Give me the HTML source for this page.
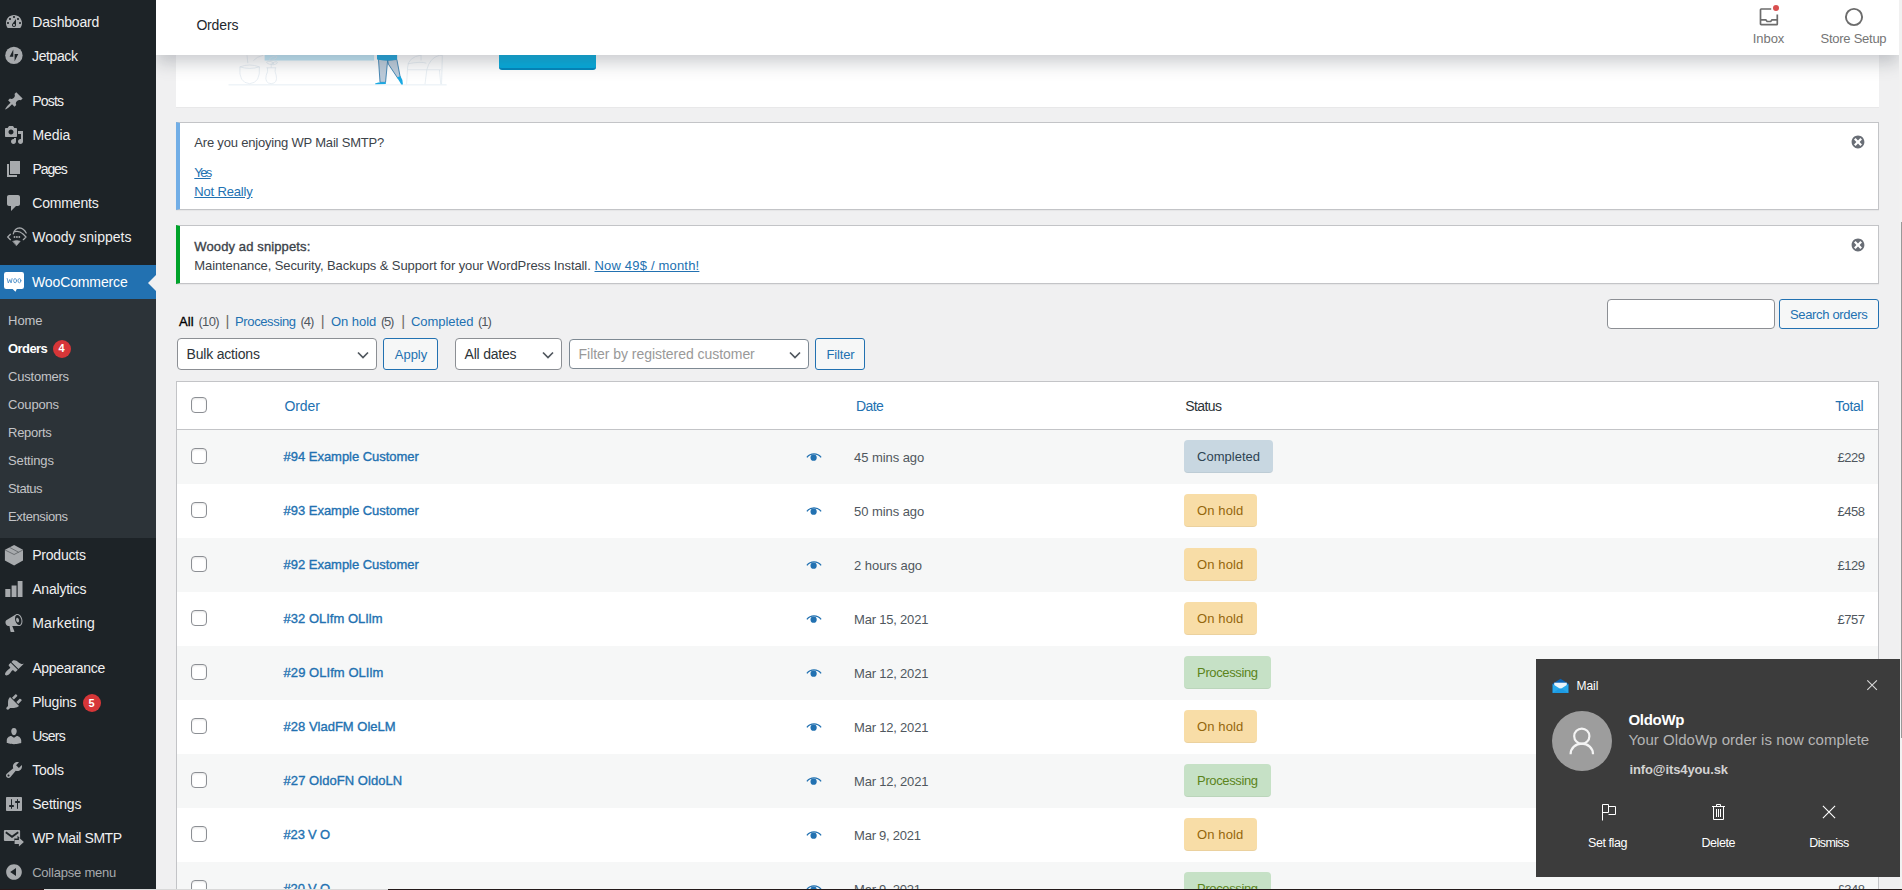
<!DOCTYPE html>
<html lang="en">
<head>
<meta charset="utf-8">
<title>Orders ‹ WooCommerce — WordPress</title>
<style>
*{box-sizing:border-box;margin:0;padding:0}
html,body{width:1902px;height:890px;overflow:hidden;background:#f0f0f1;font-family:"Liberation Sans",sans-serif;}
#root{position:relative;width:1902px;height:890px;overflow:hidden;}
.t{position:absolute;white-space:pre;font-family:"Liberation Sans",sans-serif;z-index:5;}
.abs{position:absolute;}
/* sidebar */
#menu{left:0;top:0;width:156px;height:890px;background:#1d2327;z-index:3;}
#sub{left:0;top:299px;width:156px;height:239px;background:#2c3338;z-index:3;}
#cur{left:0;top:265px;width:156px;height:34px;background:#2271b1;z-index:3;}
#arrow{left:148px;top:274.5px;width:0;height:0;border:8px solid transparent;border-right-color:#f0f0f1;border-left:0;z-index:4;}
.badge{width:18px;height:18px;border-radius:9px;background:#d63638;z-index:4;}
.ico{position:absolute;z-index:4;}
.ico svg{display:block}
/* header */
#hdr{left:156px;top:0;width:1743px;height:55px;background:#fff;z-index:2;box-shadow:0 8px 16px 0 rgba(85,93,102,.3);}
/* card */
#card{left:176px;top:0;width:1703px;height:108px;background:#fff;border-bottom:1px solid #e8e8e9;z-index:1;}
#btn{left:499px;top:30px;width:97px;height:40px;background:#00aadc;border-radius:3px;border-bottom:2px solid #0085bb;z-index:1;}
/* notices */
.notice{left:176px;width:1703px;background:#fff;border:1px solid #c3c4c7;border-left-width:4px;box-shadow:0 1px 1px rgba(0,0,0,.04);z-index:1;}
/* form controls */
.sel{background:#fff;border:1px solid #8c8f94;border-radius:4px;z-index:1;}
.but{background:#f6f7f7;border:1px solid #2271b1;border-radius:3px;z-index:1;}
.chev{position:absolute;z-index:2;}
/* table */
#tbl{left:176px;top:381px;width:1703px;height:520px;background:#fff;border:1px solid #c3c4c7;z-index:1;}
#thb{left:177px;top:429px;width:1701px;height:1px;background:#c3c4c7;z-index:2;}
.row{left:177px;width:1701px;height:54px;background:#f6f7f7;z-index:2;}
.cb{width:16px;height:16px;border:1px solid #8c8f94;border-radius:4px;background:#fff;z-index:3;box-shadow:inset 0 1px 2px rgba(0,0,0,.1);}
.st{height:33px;border-radius:4px;z-index:3;border-bottom:1px solid rgba(0,0,0,.05);}
.st.c{background:#c8d7e1;width:89px}
.st.h{background:#f8dda7;width:73px}
.st.p{background:#c6e1c6;width:87px}
.eye{position:absolute;z-index:3;}
/* toast */
#toast{left:1536px;top:659px;width:364px;height:218px;background:#3c3c3c;z-index:20;}
.ti{position:absolute;z-index:30;}
/* scrollbar + bottom line */
#sbar{left:1899px;top:0;width:3px;height:890px;background:#f1f1f1;z-index:12;}
#sthumb{left:1900.5px;top:222px;width:1.5px;height:516px;background:#999;z-index:13;}
.bl{top:889px;height:1px;z-index:40;}
</style>
</head>
<body>
<div id="root">

<!-- ======= sidebar ======= -->
<div id="menu" class="abs"></div>
<div id="sub" class="abs"></div>
<div id="cur" class="abs"></div>
<div id="arrow" class="abs"></div>
<div class="abs badge" style="left:52.8px;top:339.8px"></div>
<div class="abs badge" style="left:82.7px;top:694.3px"></div>
<div class="ico" style="left:4px;top:12px"><svg width="20" height="20" viewBox="0 0 20 20"><path fill="#a7aaad" d="M3.76 16h12.48c1.1-1.37 1.76-3.11 1.76-5 0-4.42-3.58-8-8-8s-8 3.58-8 8c0 1.89.66 3.63 1.76 5zM10 4c.55 0 1 .45 1 1s-.45 1-1 1-1-.45-1-1 .45-1 1-1zM6 6c.55 0 1 .45 1 1s-.45 1-1 1-1-.45-1-1 .45-1 1-1zm8 0c.55 0 1 .45 1 1s-.45 1-1 1-1-.45-1-1 .45-1 1-1zm-5.37 5.55L12 7v6c0 1.1-.9 2-2 2s-2-.9-2-2c0-.57.24-1.08.63-1.45zM4 10c.55 0 1 .45 1 1s-.45 1-1 1-1-.45-1-1 .45-1 1-1zm12 0c.55 0 1 .45 1 1s-.45 1-1 1-1-.45-1-1 .45-1 1-1zm-5 3c0-.55-.45-1-1-1s-1 .45-1 1 .45 1 1 1 1-.45 1-1z"/></svg></div>
<div class="ico" style="left:4px;top:46px"><svg width="20" height="20" viewBox="0 0 20 20"><circle cx="9.9" cy="9.4" r="8.7" fill="#a7aaad"/><path fill="#1d2327" d="M9.300 3.500v7.300H5.600zM10.600 15.300V8h3.700z"/></svg></div>
<div class="ico" style="left:4px;top:91px"><svg width="20" height="20" viewBox="0 0 20 20"><path fill="#a7aaad" d="M10.44 3.02l1.82-1.82 6.36 6.35-1.83 1.82c-1.05-.68-2.48-.57-3.41.36l-.75.75c-.92.93-1.04 2.35-.35 3.41l-1.83 1.82-2.41-2.41-2.8 2.79c-.42.42-3.38 2.71-3.8 2.29s1.86-3.39 2.28-3.81l2.79-2.79L4.1 9.36l1.83-1.82c1.05.69 2.48.57 3.4-.36l.75-.75c.93-.92 1.05-2.35.36-3.41z"/></svg></div>
<div class="ico" style="left:4px;top:125px"><svg width="20" height="20" viewBox="0 0 20 20"><path fill="#a7aaad" d="M13 11V4c0-.55-.45-1-1-1h-1.67L9 1H5L3.67 3H2c-.55 0-1 .45-1 1v7c0 .55.45 1 1 1h10c.55 0 1-.45 1-1zM7 4.5c1.38 0 2.5 1.12 2.5 2.5S8.38 9.5 7 9.5 4.5 8.38 4.5 7 5.62 4.5 7 4.5zM14 6h5v10.5c0 1.38-1.12 2.5-2.5 2.5S14 17.88 14 16.5s1.12-2.5 2.5-2.5c.17 0 .34.02.5.05V9h-3V6zm-4 8.05V13h2v3.5c0 1.38-1.12 2.5-2.5 2.5S7 17.88 7 16.5 8.12 14 9.5 14c.17 0 .34.02.5.05z"/></svg></div>
<div class="ico" style="left:4px;top:159px"><svg width="20" height="20" viewBox="0 0 20 20"><path fill="#a7aaad" d="M6 15V2h10v13H6zm-1 1h8v2H3V5h2v11z"/></svg></div>
<div class="ico" style="left:4px;top:193px"><svg width="20" height="20" viewBox="0 0 20 20"><path fill="#a7aaad" d="M5 2h9c1.1 0 2 .9 2 2v7c0 1.1-.9 2-2 2h-2l-5 5v-5H5c-1.1 0-2-.9-2-2V4c0-1.1.9-2 2-2z"/></svg></div>
<div class="ico" style="left:6.700px;top:227px"><svg width="21" height="20" viewBox="0 0 21 20" fill="none" stroke="#a7aaad" stroke-width="1.250" stroke-linecap="round" stroke-linejoin="round"><path d="M3.400 7.300L.7 10l2.700 2.700"/><path d="M16.300 7.300L19 10l-2.700 2.700"/><path d="M6.300 6.800C7.200 3 9.800.9 12.600.8c2.800.4 5.200 2.300 6.600 5.200"/><path d="M7.600 4.700c2.600-.9 5.900 0 8.300 2.200"/><circle cx="7.500" cy="10" r=".95" fill="#a7aaad" stroke="none"/><circle cx="9.900" cy="10" r=".95" fill="#a7aaad" stroke="none"/><circle cx="12.300" cy="10" r=".95" fill="#a7aaad" stroke="none"/><path d="M6 14.300l3.600-.9 3.600.9-3.600 4.200z" fill="#a7aaad" stroke-width=".6"/></svg></div>
<div class="ico" style="left:4px;top:272px"><svg width="20" height="20" viewBox="0 0 20 20"><path fill="#fff" d="M2.200 0h15.600a2.200 2.200 0 012.200 2.200v12.600a2.200 2.200 0 01-2.200 2.200H12.800l-1.300 2.700L8.600 17H2.200A2.200 2.200 0 010 14.800V2.200A2.200 2.200 0 012.200 0z"/><g fill="none" stroke="#4d8fc7" stroke-width=".85" stroke-linecap="round" stroke-linejoin="round"><path d="M3.200 6.500l1.100 4.500 1.500-3.500 1.300 3.500 1-4.500"/><ellipse cx="11.100" cy="8.700" rx="1.450" ry="2.100"/><ellipse cx="15.400" cy="8.700" rx="1.450" ry="2.100"/></g></svg></div>
<div class="ico" style="left:4px;top:544px"><svg width="20" height="22" viewBox="0 0 20 22"><path fill="#a7aaad" d="M10.100 1L19 5.700v10.700L10.100 21.500.9 16.400V5.700z"/><path stroke="#1d2327" stroke-width=".55" fill="none" opacity=".8" d="M1.100 6L10.100 10.500 18.900 6M5.600 3.400l8.900 4.800"/></svg></div>
<div class="ico" style="left:0;top:580px"><svg width="24" height="18" viewBox="0 0 24 18"><path fill="#a7aaad" d="M5.300 9h5.100v8H5.300zM11.600 5.600h4.900V17h-4.900zM17.700 1h4.800v16h-4.800z"/></svg></div>
<div class="ico" style="left:4px;top:613px"><svg width="20" height="20" viewBox="0 0 20 20"><path fill="#a7aaad" d="M18.15 5.94c.46 1.62.38 3.22-.02 4.48-.42 1.28-1.26 2.18-2.3 2.48-.16.06-.26.06-.4.06-.06.02-.12.02-.18.02-.06.02-.14.02-.22.02h-6.8l2.22 5.5c.02.14-.06.26-.14.34-.08.1-.24.16-.34.16H6.950c-.1 0-.26-.06-.34-.16-.08-.08-.16-.2-.14-.34l-1-5.500H4.250l-.02-.02c-.5.06-1.080-.18-1.540-.62s-.88-1.080-1.060-1.880c-.24-.8-.2-1.560-.02-2.200.18-.62.58-1.080 1.060-1.300l.02-.02 9-5.400c.1-.06.18-.1.24-.16.06-.04.14-.08.24-.12.16-.08.28-.12.5-.18 1.040-.3 2.240.1 3.220.98s1.840 2.240 2.260 3.860zm-2.580 5.980h-.02c.4-.1.74-.34 1.040-.7.58-.7.86-1.760.86-3.040 0-.64-.1-1.300-.28-1.980-.34-1.360-1.020-2.500-1.780-3.240s-1.680-1.100-2.460-.88c-.82.22-1.400.96-1.700 2-.32 1.040-.28 2.360.06 3.720.38 1.360 1 2.500 1.800 3.240.78.740 1.620 1.100 2.480.88zm-2.540-7.080c.22-.04.42-.02.62.04.38.16.76.48 1.020 1s.42 1.200.42 1.780c0 .3-.04.56-.12.8-.18.48-.44.84-.86.940-.34.1-.8-.06-1.140-.4s-.64-.86-.78-1.500c-.18-.62-.12-1.240.02-1.720s.48-.84.82-.94z"/></svg></div>
<div class="ico" style="left:4px;top:658px"><svg width="20" height="20" viewBox="0 0 20 20"><path fill="#a7aaad" d="M14.48 11.06L7.41 3.99l1.5-1.5c.5-.56 2.3-.47 3.51.32 1.21.8 1.43 1.28 2.91 2.1 1.18.64 2.45 1.26 4.45.85zm-.71.71L6.7 4.7 4.93 6.47c-.39.39-.39 1.02 0 1.41l1.06 1.06c.39.39.39 1.03 0 1.42-.6.6-1.43 1.11-2.21 1.69-.35.26-.7.53-1.01.84C1.43 14.23.4 16.08 1.4 17.07c.99 1 2.84-.03 4.18-1.36.31-.31.58-.66.85-1.02.57-.78 1.08-1.61 1.69-2.21.39-.39 1.02-.39 1.41 0l1.06 1.06c.39.39 1.02.39 1.41 0z"/></svg></div>
<div class="ico" style="left:4px;top:692px"><svg width="20" height="20" viewBox="0 0 20 20"><path fill="#a7aaad" d="M13.11 4.36L9.87 7.6 8 5.73l3.24-3.24c.35-.34 1.05-.2 1.56.32.52.51.66 1.21.31 1.55zm-8 1.77l.91-1.12 9.01 9.01-1.19.84c-.71.71-2.63 1.16-3.82 1.16H6.14L4.9 17.26c-.59.59-1.54.59-2.12 0-.59-.58-.59-1.53 0-2.12l1.24-1.24v-3.88c0-1.13.4-3.19 1.09-3.89zm7.26 3.97l3.24-3.24c.34-.35 1.04-.21 1.55.31.52.51.66 1.21.31 1.55l-3.24 3.25z"/></svg></div>
<div class="ico" style="left:4px;top:726px"><svg width="20" height="20" viewBox="0 0 20 20"><path fill="#a7aaad" d="M10 9.25c-2.27 0-2.73-3.44-2.73-3.44C7 4.02 7.82 2 9.97 2c2.16 0 2.98 2.02 2.71 3.81 0 0-.41 3.44-2.68 3.44zm0 2.57L12.72 10c2.39 0 4.52 2.33 4.52 4.53v2.49s-3.65 1.13-7.24 1.13c-3.65 0-7.24-1.13-7.24-1.13v-2.49c0-2.25 1.94-4.48 4.47-4.48z"/></svg></div>
<div class="ico" style="left:4px;top:760px"><svg width="20" height="20" viewBox="0 0 20 20"><path fill="#a7aaad" d="M16.68 9.77c-1.34 1.34-3.3 1.67-4.95.99l-5.41 6.52c-.99.99-2.59.99-3.58 0s-.99-2.59 0-3.57l6.52-5.42c-.68-1.65-.35-3.61.99-4.95 1.28-1.28 3.12-1.62 4.72-1.06l-2.89 2.89 2.82 2.82 2.86-2.87c.53 1.58.18 3.39-1.08 4.65zM3.81 16.21c.4.39 1.04.39 1.43 0 .4-.4.4-1.04 0-1.43-.39-.4-1.03-.4-1.43 0-.39.39-.39 1.03 0 1.43z"/></svg></div>
<div class="ico" style="left:4px;top:794px"><svg width="20" height="20" viewBox="0 0 20 20"><path fill="#a7aaad" d="M18 16V4c0-.55-.45-1-1-1H3c-.55 0-1 .45-1 1v12c0 .55.45 1 1 1h14c.55 0 1-.45 1-1zM8 11h1c.55 0 1 .45 1 1s-.45 1-1 1H8v1.5c0 .28-.22.5-.5.5s-.5-.22-.5-.5V13H6c-.55 0-1-.45-1-1s.45-1 1-1h1V5.500c0-.28.22-.5.5-.5s.5.22.5.5V11zm5-2h-1c-.55 0-1-.45-1-1s.45-1 1-1h1V5.500c0-.28.22-.5.5-.5s.5.22.5.5V7h1c.55 0 1 .45 1 1s-.45 1-1 1h-1v5.500c0 .28-.22.5-.5.5s-.5-.22-.5-.5V9z"/></svg></div>
<div class="ico" style="left:3px;top:829px"><svg width="22" height="20" viewBox="0 0 22 20"><path fill="#a7aaad" d="M2 1h14a1.100 1.100 0 011.100 1.100v7.100l-2.600-2.500v2.800h-3.200V12H2A1.100 1.100 0 01.9 10.900V2.100A1.100 1.100 0 012 1z"/><path d="M2.800 3.200l6.200 4.600 6.200-4.600" fill="none" stroke="#1d2327" stroke-width="1.800"/><path fill="#a7aaad" d="M11.600 10.900h4.300V8.600l5 4.400-5 4.400v-2.400h-4.300z"/></svg></div>
<div class="ico" style="left:4px;top:862px"><svg width="20" height="20" viewBox="0 0 20 20"><path fill="#a7aaad" d="M10 2.160c4.330 0 7.840 3.510 7.840 7.840s-3.510 7.840-7.840 7.840S2.160 14.330 2.160 10 5.670 2.160 10 2.160zm2 11.720V6.120L6.180 9.970z"/></svg></div>

<!-- ======= content ======= -->
<div id="card" class="abs"></div>
<div id="btn" class="abs"></div>
<svg class="abs" style="left:216px;top:50px;z-index:1" width="250" height="60" viewBox="0 0 1902 456">
<rect x="370" y="0" width="833" height="80" fill="#c1e8f8"/>
<path d="M95 265H1755" stroke="#e0eaf1" stroke-width="6" fill="none"/>
<g fill="none" stroke="#dde7ee" stroke-width="5">
<path d="M182 128Q170 250 256 256Q340 250 330 128M182 128Q256 100 330 128M182 128Q256 152 330 128M242 100L236 40M285 80Q310 50 360 40"/>
<path d="M384 135H458M392 135Q398 165 382 192Q368 252 420 256Q472 252 458 192Q444 165 452 135M420 135V100"/>
<ellipse cx="435" cy="62" rx="30" ry="12" transform="rotate(-25 435 62)"/><ellipse cx="412" cy="98" rx="28" ry="11" transform="rotate(15 412 98)"/><ellipse cx="448" cy="100" rx="20" ry="9" transform="rotate(-20 448 100)"/>
<path d="M1450 260L1458 130Q1462 55 1560 38M1458 150H1712M1458 105Q1560 85 1600 100M1590 260L1604 150Q1625 60 1700 40H1722L1716 260M1700 152L1710 260M1560 38V80"/>
</g>
<path d="M1236 70L1306 76L1290 246L1248 246Z" fill="#bccbda" stroke="#1f6fa6" stroke-width="6" stroke-linejoin="round"/>
<path d="M1306 78L1376 72L1402 208L1384 216L1312 108Z" fill="#bccbda" stroke="#1f6fa6" stroke-width="6" stroke-linejoin="round"/>
<path d="M1225 0H1378V72Q1300 88 1225 72Z" fill="#1aa3da"/>
<path d="M1210 254Q1245 240 1292 246V258L1212 261Z" fill="#19a9e3"/>
<path d="M1376 208L1404 200Q1426 232 1422 262H1410Z" fill="#19a9e3"/>
</svg>
<div id="hdr" class="abs"></div><svg class="abs" style="left:1758px;top:2px;z-index:6" width="24" height="26" viewBox="0 0 24 26"><path d="M13.200 7H3.200a.7.700 0 00-.7.700V22a.7.700 0 00.7.700h15.400a.7.700 0 00.7-.7V12.500" fill="none" stroke="#6c6c6c" stroke-width="1.700"/><path d="M2.500 17.800h5.300l1.300 1.700h3.600l1.300-1.700h5.300" fill="none" stroke="#6c6c6c" stroke-width="1.700"/><circle cx="18" cy="6" r="3" fill="#d94f4f"/></svg>
<svg class="abs" style="left:1843px;top:6px;z-index:6" width="22" height="22" viewBox="0 0 22 22"><circle cx="11" cy="11" r="8.100" fill="none" stroke="#6c6c6c" stroke-width="1.900"/></svg>

<div class="abs notice" style="top:122px;height:88px;border-left-color:#72aee6"></div>
<div class="abs notice" style="top:225px;height:59px;border-left-color:#00a32a"></div>
<div class="ico" style="left:1850px;top:134px"><svg width="16" height="16" viewBox="0 0 20 20"><path fill="#696e76" d="M10 2c4.420 0 8 3.580 8 8s-3.580 8-8 8-8-3.580-8-8 3.580-8 8-8zm5 11l-3-3 3-3-2-2-3 3-3-3-2 2 3 3-3 3 2 2 3-3 3 3z"/></svg></div><div class="ico" style="left:1850px;top:237px"><svg width="16" height="16" viewBox="0 0 20 20"><path fill="#696e76" d="M10 2c4.420 0 8 3.580 8 8s-3.580 8-8 8-8-3.580-8-8 3.580-8 8-8zm5 11l-3-3 3-3-2-2-3 3-3-3-2 2 3 3-3 3 2 2 3-3 3 3z"/></svg></div>

<div class="abs sel" style="left:1607px;top:299px;width:168px;height:30px"></div>
<div class="abs but" style="left:1779px;top:299px;width:100px;height:30px"></div>

<div class="abs sel" style="left:177px;top:338px;width:200px;height:32px"></div>
<div class="abs but" style="left:383px;top:338px;width:55px;height:32px"></div>
<div class="abs sel" style="left:455px;top:338px;width:107px;height:32px"></div>
<div class="abs sel" style="left:569px;top:339px;width:240px;height:30px;border-color:#7e8993"></div>
<div class="abs but" style="left:815px;top:338px;width:50px;height:32px"></div>
<svg class="chev" style="left:356.8px;top:350.6px" width="12" height="8" viewBox="0 0 12 8"><path d="M1 1.500l5 5 5-5" fill="none" stroke="#50575e" stroke-width="1.700"/></svg><svg class="chev" style="left:541.8px;top:350.6px" width="12" height="8" viewBox="0 0 12 8"><path d="M1 1.500l5 5 5-5" fill="none" stroke="#50575e" stroke-width="1.700"/></svg><svg class="chev" style="left:789px;top:350.6px" width="12" height="8" viewBox="0 0 12 8"><path d="M1 1.500l5 5 5-5" fill="none" stroke="#50575e" stroke-width="1.700"/></svg>

<div id="tbl" class="abs"></div>
<div id="thb" class="abs"></div>
<div class="abs row" style="top:430px"></div>
<div class="abs cb" style="left:191px;top:448px"></div>
<div class="abs st c" style="left:1184px;top:440px"></div>
<svg class="eye" style="left:806px;top:453px" width="16" height="9" viewBox="0 0 16 9"><path d="M.9 4.300C2.800 1.900 5.300.8 8 .8s5.200 1.100 7.100 3.500" fill="none" stroke="#2271b1" stroke-width="1.300"/><circle cx="7.600" cy="4.700" r="3.100" fill="#2271b1"/></svg>
<div class="abs cb" style="left:191px;top:502px"></div>
<div class="abs st h" style="left:1184px;top:494px"></div>
<svg class="eye" style="left:806px;top:507px" width="16" height="9" viewBox="0 0 16 9"><path d="M.9 4.300C2.800 1.900 5.300.8 8 .8s5.200 1.100 7.100 3.500" fill="none" stroke="#2271b1" stroke-width="1.300"/><circle cx="7.600" cy="4.700" r="3.100" fill="#2271b1"/></svg>
<div class="abs row" style="top:538px"></div>
<div class="abs cb" style="left:191px;top:556px"></div>
<div class="abs st h" style="left:1184px;top:548px"></div>
<svg class="eye" style="left:806px;top:561px" width="16" height="9" viewBox="0 0 16 9"><path d="M.9 4.300C2.800 1.900 5.300.8 8 .8s5.200 1.100 7.100 3.500" fill="none" stroke="#2271b1" stroke-width="1.300"/><circle cx="7.600" cy="4.700" r="3.100" fill="#2271b1"/></svg>
<div class="abs cb" style="left:191px;top:610px"></div>
<div class="abs st h" style="left:1184px;top:602px"></div>
<svg class="eye" style="left:806px;top:615px" width="16" height="9" viewBox="0 0 16 9"><path d="M.9 4.300C2.800 1.900 5.300.8 8 .8s5.200 1.100 7.100 3.500" fill="none" stroke="#2271b1" stroke-width="1.300"/><circle cx="7.600" cy="4.700" r="3.100" fill="#2271b1"/></svg>
<div class="abs row" style="top:646px"></div>
<div class="abs cb" style="left:191px;top:664px"></div>
<div class="abs st p" style="left:1184px;top:656px"></div>
<svg class="eye" style="left:806px;top:669px" width="16" height="9" viewBox="0 0 16 9"><path d="M.9 4.300C2.800 1.900 5.300.8 8 .8s5.200 1.100 7.100 3.500" fill="none" stroke="#2271b1" stroke-width="1.300"/><circle cx="7.600" cy="4.700" r="3.100" fill="#2271b1"/></svg>
<div class="abs cb" style="left:191px;top:718px"></div>
<div class="abs st h" style="left:1184px;top:710px"></div>
<svg class="eye" style="left:806px;top:723px" width="16" height="9" viewBox="0 0 16 9"><path d="M.9 4.300C2.800 1.900 5.300.8 8 .8s5.200 1.100 7.100 3.500" fill="none" stroke="#2271b1" stroke-width="1.300"/><circle cx="7.600" cy="4.700" r="3.100" fill="#2271b1"/></svg>
<div class="abs row" style="top:754px"></div>
<div class="abs cb" style="left:191px;top:772px"></div>
<div class="abs st p" style="left:1184px;top:764px"></div>
<svg class="eye" style="left:806px;top:777px" width="16" height="9" viewBox="0 0 16 9"><path d="M.9 4.300C2.800 1.900 5.300.8 8 .8s5.200 1.100 7.100 3.500" fill="none" stroke="#2271b1" stroke-width="1.300"/><circle cx="7.600" cy="4.700" r="3.100" fill="#2271b1"/></svg>
<div class="abs cb" style="left:191px;top:826px"></div>
<div class="abs st h" style="left:1184px;top:818px"></div>
<svg class="eye" style="left:806px;top:831px" width="16" height="9" viewBox="0 0 16 9"><path d="M.9 4.300C2.800 1.900 5.300.8 8 .8s5.200 1.100 7.100 3.500" fill="none" stroke="#2271b1" stroke-width="1.300"/><circle cx="7.600" cy="4.700" r="3.100" fill="#2271b1"/></svg>
<div class="abs row" style="top:862px"></div>
<div class="abs cb" style="left:191px;top:880px"></div>
<div class="abs st p" style="left:1184px;top:872px"></div>
<svg class="eye" style="left:806px;top:885px" width="16" height="9" viewBox="0 0 16 9"><path d="M.9 4.300C2.800 1.900 5.300.8 8 .8s5.200 1.100 7.100 3.500" fill="none" stroke="#2271b1" stroke-width="1.300"/><circle cx="7.600" cy="4.700" r="3.100" fill="#2271b1"/></svg>
<div class="abs cb" style="left:191px;top:397px"></div>

<!-- ======= toast ======= -->
<div id="toast" class="abs"></div>
<svg class="ti" style="left:1551.500px;top:677.500px" width="17" height="16" viewBox="0 0 18 17"><path d="M.6 6.200L9 .8l8.400 5.400V16H.6z" fill="#0a62b5"/><path d="M2.300 5h13.400v7H2.300z" fill="#eaf4fb"/><path d="M.6 6.400L9 11.700l8.400-5.300V16H.6z" fill="#28a8ea"/><path d="M.6 16L9 10.600l8.400 5.400z" fill="#1490df" opacity=".55"/></svg>
<svg class="ti" style="left:1866px;top:679px" width="12" height="12" viewBox="0 0 12 12"><path d="M1.300 1.300l9.600 9.600M10.900 1.300l-9.600 9.600" stroke="#d8d8d8" stroke-width="1.100" fill="none"/></svg>
<div class="ti" style="left:1552px;top:711px;width:60px;height:60px;border-radius:30px;background:#9d9d9d"></div>
<svg class="ti" style="left:1552px;top:711px" width="60" height="60" viewBox="0 0 60 60"><circle cx="29.800" cy="25.200" r="7.600" fill="none" stroke="#f4f4f4" stroke-width="2.200"/><path d="M18.600 43.300c0-6.200 5-10.600 11.200-10.600s11.200 4.400 11.200 10.600" fill="none" stroke="#f4f4f4" stroke-width="2.200"/></svg>
<svg class="ti" style="left:1601px;top:803px" width="16" height="18" viewBox="0 0 16 18" fill="none" stroke="#fff" stroke-width="1"><path d="M1.500 17.500V1.500h6v8h-6"/><path d="M7.500 3.500h7v8h-7"/></svg>
<svg class="ti" style="left:1711px;top:803px" width="16" height="18" viewBox="0 0 16 18" fill="none" stroke="#fff" stroke-width="1"><path d="M1 3.500h13M5.500 3.500v-2h4v2M2.500 3.500v13h10v-13M5.500 6v8M7.500 6v8M9.500 6v8"/></svg>
<svg class="ti" style="left:1822px;top:805px" width="14" height="14" viewBox="0 0 14 14"><path d="M.9 .9l12.200 12.200M13.100 .9L.9 13.100" stroke="#fff" stroke-width="1.100" fill="none"/></svg>

<div id="sbar" class="abs"></div>
<div id="sthumb" class="abs"></div>
<div class="abs bl" style="left:0;width:44px;background:#2a1718"></div>
<div class="abs bl" style="left:44px;width:344px;background:#d9d9d9"></div>
<div class="abs bl" style="left:388px;width:1514px;background:#241a1a"></div>

<span class="t" style="left:32.3px;top:15.15px;font-size:14px;line-height:14px;color:#f0f0f1;letter-spacing:-0.188px;">Dashboard</span>
<span class="t" style="left:32.0px;top:49.15px;font-size:14px;line-height:14px;color:#f0f0f1;letter-spacing:-0.375px;">Jetpack</span>
<span class="t" style="left:32.3px;top:94.15px;font-size:14px;line-height:14px;color:#f0f0f1;letter-spacing:-0.829px;">Posts</span>
<span class="t" style="left:32.5px;top:128.15px;font-size:14px;line-height:14px;color:#f0f0f1;letter-spacing:-0.085px;">Media</span>
<span class="t" style="left:32.5px;top:162.15px;font-size:14px;line-height:14px;color:#f0f0f1;letter-spacing:-1.101px;">Pages</span>
<span class="t" style="left:32.2px;top:196.15px;font-size:14px;line-height:14px;color:#f0f0f1;letter-spacing:-0.155px;">Comments</span>
<span class="t" style="left:32.2px;top:230.15px;font-size:14px;line-height:14px;color:#f0f0f1;letter-spacing:-0.012px;">Woody snippets</span>
<span class="t" style="left:32.0px;top:275.15px;font-size:14px;line-height:14px;color:#ffffff;letter-spacing:-0.12px;">WooCommerce</span>
<span class="t" style="left:8.1px;top:314.00px;font-size:13px;line-height:13px;color:#c3c4c7;letter-spacing:-0.062px;">Home</span>
<span class="t" style="left:8.1px;top:342.00px;font-size:13px;line-height:13px;font-weight:700;color:#ffffff;letter-spacing:-0.608px;">Orders</span>
<span class="t" style="left:8.1px;top:370.00px;font-size:13px;line-height:13px;color:#c3c4c7;letter-spacing:-0.232px;">Customers</span>
<span class="t" style="left:8.1px;top:398.00px;font-size:13px;line-height:13px;color:#c3c4c7;letter-spacing:-0.174px;">Coupons</span>
<span class="t" style="left:8.1px;top:426.00px;font-size:13px;line-height:13px;color:#c3c4c7;letter-spacing:-0.305px;">Reports</span>
<span class="t" style="left:8.1px;top:454.00px;font-size:13px;line-height:13px;color:#c3c4c7;letter-spacing:-0.169px;">Settings</span>
<span class="t" style="left:8.1px;top:482.00px;font-size:13px;line-height:13px;color:#c3c4c7;letter-spacing:-0.472px;">Status</span>
<span class="t" style="left:8.1px;top:510.00px;font-size:13px;line-height:13px;color:#c3c4c7;letter-spacing:-0.399px;">Extensions</span>
<span class="t" style="left:58.6px;top:343.29px;font-size:11px;line-height:11px;font-weight:700;color:#ffffff;">4</span>
<span class="t" style="left:32.2px;top:548.15px;font-size:14px;line-height:14px;color:#f0f0f1;letter-spacing:-0.221px;">Products</span>
<span class="t" style="left:32.2px;top:582.15px;font-size:14px;line-height:14px;color:#f0f0f1;letter-spacing:-0.204px;">Analytics</span>
<span class="t" style="left:32.2px;top:616.15px;font-size:14px;line-height:14px;color:#f0f0f1;letter-spacing:0.154px;">Marketing</span>
<span class="t" style="left:32.2px;top:661.15px;font-size:14px;line-height:14px;color:#f0f0f1;letter-spacing:-0.28px;">Appearance</span>
<span class="t" style="left:32.2px;top:695.15px;font-size:14px;line-height:14px;color:#f0f0f1;letter-spacing:-0.27px;">Plugins</span>
<span class="t" style="left:88.6px;top:697.69px;font-size:11px;line-height:11px;font-weight:700;color:#ffffff;">5</span>
<span class="t" style="left:32.2px;top:729.15px;font-size:14px;line-height:14px;color:#f0f0f1;letter-spacing:-0.766px;">Users</span>
<span class="t" style="left:32.2px;top:763.15px;font-size:14px;line-height:14px;color:#f0f0f1;letter-spacing:-0.247px;">Tools</span>
<span class="t" style="left:32.2px;top:797.15px;font-size:14px;line-height:14px;color:#f0f0f1;letter-spacing:-0.199px;">Settings</span>
<span class="t" style="left:32.2px;top:831.15px;font-size:14px;line-height:14px;color:#f0f0f1;letter-spacing:-0.431px;">WP Mail SMTP</span>
<span class="t" style="left:32.2px;top:866.00px;font-size:13px;line-height:13px;color:#a7aaad;letter-spacing:-0.218px;">Collapse menu</span>
<span class="t" style="left:196.4px;top:18.45px;font-size:14px;line-height:14px;color:#23282d;letter-spacing:-0.159px;">Orders</span>
<span class="t" style="left:1752.8px;top:32.00px;font-size:13px;line-height:13px;color:#757575;letter-spacing:-0.078px;">Inbox</span>
<span class="t" style="left:1820.6px;top:32.00px;font-size:13px;line-height:13px;color:#757575;letter-spacing:-0.266px;">Store Setup</span>
<span class="t" style="left:194.3px;top:136.40px;font-size:13px;line-height:13px;color:#3c434a;letter-spacing:-0.192px;">Are you enjoying WP Mail SMTP?</span>
<span class="t" style="left:194.3px;top:166.20px;font-size:13px;line-height:13px;color:#2271b1;letter-spacing:-1.609px;text-decoration:underline;">Yes</span>
<span class="t" style="left:194.3px;top:185.00px;font-size:13px;line-height:13px;color:#2271b1;letter-spacing:-0.174px;text-decoration:underline;">Not Really</span>
<span class="t" style="left:194.3px;top:239.90px;font-size:13px;line-height:13px;-webkit-text-stroke:.35px currentColor;color:#3c434a;letter-spacing:0.12px;">Woody ad snippets:</span>
<span class="t" style="left:194.3px;top:258.70px;font-size:13px;line-height:13px;color:#3c434a;letter-spacing:-0.093px;">Maintenance, Security, Backups &amp; Support for your WordPress Install.</span>
<span class="t" style="left:594.5px;top:258.70px;font-size:13px;line-height:13px;color:#2271b1;letter-spacing:0.187px;text-decoration:underline;">Now 49$ / month!</span>
<span class="t" style="left:179.0px;top:314.80px;font-size:13px;line-height:13px;-webkit-text-stroke:.35px currentColor;color:#000000;letter-spacing:0.123px;">All</span>
<span class="t" style="left:198.4px;top:314.80px;font-size:13px;line-height:13px;color:#50575e;letter-spacing:-0.608px;">(10)</span>
<span class="t" style="left:225.6px;top:312.50px;font-size:15px;line-height:15px;color:#6f6a66;">|</span>
<span class="t" style="left:235.0px;top:314.80px;font-size:13px;line-height:13px;color:#2271b1;letter-spacing:-0.368px;">Processing</span>
<span class="t" style="left:300.6px;top:314.80px;font-size:13px;line-height:13px;color:#50575e;letter-spacing:-1.095px;">(4)</span>
<span class="t" style="left:320.8px;top:312.50px;font-size:15px;line-height:15px;color:#6f6a66;">|</span>
<span class="t" style="left:330.9px;top:314.80px;font-size:13px;line-height:13px;color:#2271b1;letter-spacing:-0.024px;">On hold</span>
<span class="t" style="left:381.0px;top:314.80px;font-size:13px;line-height:13px;color:#50575e;letter-spacing:-1.295px;">(5)</span>
<span class="t" style="left:401.2px;top:312.50px;font-size:15px;line-height:15px;color:#6f6a66;">|</span>
<span class="t" style="left:410.9px;top:314.80px;font-size:13px;line-height:13px;color:#2271b1;letter-spacing:-0.034px;">Completed</span>
<span class="t" style="left:478.0px;top:314.80px;font-size:13px;line-height:13px;color:#50575e;letter-spacing:-1.045px;">(1)</span>
<span class="t" style="left:186.6px;top:347.05px;font-size:14px;line-height:14px;color:#2c3338;letter-spacing:-0.199px;">Bulk actions</span>
<span class="t" style="left:394.8px;top:347.90px;font-size:13px;line-height:13px;color:#2271b1;letter-spacing:-0.033px;">Apply</span>
<span class="t" style="left:464.6px;top:347.05px;font-size:14px;line-height:14px;color:#2c3338;letter-spacing:-0.213px;">All dates</span>
<span class="t" style="left:578.6px;top:347.05px;font-size:14px;line-height:14px;color:#999999;letter-spacing:-0.043px;">Filter by registered customer</span>
<span class="t" style="left:826.5px;top:347.90px;font-size:13px;line-height:13px;color:#2271b1;letter-spacing:-0.138px;">Filter</span>
<span class="t" style="left:1789.9px;top:308.30px;font-size:13px;line-height:13px;color:#2271b1;letter-spacing:-0.321px;">Search orders</span>
<span class="t" style="left:284.5px;top:399.05px;font-size:14px;line-height:14px;color:#2271b1;letter-spacing:-0.124px;">Order</span>
<span class="t" style="left:855.9px;top:399.05px;font-size:14px;line-height:14px;color:#2271b1;letter-spacing:-0.526px;">Date</span>
<span class="t" style="left:1185.3px;top:399.05px;font-size:14px;line-height:14px;color:#2c3338;letter-spacing:-0.601px;">Status</span>
<span class="t" style="left:1835.3px;top:399.05px;font-size:14px;line-height:14px;color:#2271b1;letter-spacing:-0.295px;">Total</span>
<span class="t" style="left:283.6px;top:450.00px;font-size:13px;line-height:13px;-webkit-text-stroke:.35px currentColor;color:#2271b1;letter-spacing:-0.029px;">#94 Example Customer</span>
<span class="t" style="left:854.1px;top:450.50px;font-size:13px;line-height:13px;color:#50575e;letter-spacing:-0.073px;">45 mins ago</span>
<span class="t" style="left:1197.1px;top:449.80px;font-size:13px;line-height:13px;color:#2e4453;letter-spacing:0.016px;">Completed</span>
<span class="t" style="left:1837.4px;top:450.80px;font-size:13px;line-height:13px;color:#50575e;letter-spacing:-0.441px;">£229</span>
<span class="t" style="left:283.6px;top:504.00px;font-size:13px;line-height:13px;-webkit-text-stroke:.35px currentColor;color:#2271b1;letter-spacing:-0.029px;">#93 Example Customer</span>
<span class="t" style="left:854.1px;top:504.50px;font-size:13px;line-height:13px;color:#50575e;letter-spacing:-0.073px;">50 mins ago</span>
<span class="t" style="left:1197.1px;top:503.80px;font-size:13px;line-height:13px;color:#94660c;letter-spacing:0.109px;">On hold</span>
<span class="t" style="left:1837.4px;top:504.80px;font-size:13px;line-height:13px;color:#50575e;letter-spacing:-0.441px;">£458</span>
<span class="t" style="left:283.6px;top:558.00px;font-size:13px;line-height:13px;-webkit-text-stroke:.35px currentColor;color:#2271b1;letter-spacing:-0.029px;">#92 Example Customer</span>
<span class="t" style="left:854.1px;top:558.50px;font-size:13px;line-height:13px;color:#50575e;letter-spacing:-0.067px;">2 hours ago</span>
<span class="t" style="left:1197.1px;top:557.80px;font-size:13px;line-height:13px;color:#94660c;letter-spacing:0.109px;">On hold</span>
<span class="t" style="left:1837.4px;top:558.80px;font-size:13px;line-height:13px;color:#50575e;letter-spacing:-0.441px;">£129</span>
<span class="t" style="left:283.6px;top:612.00px;font-size:13px;line-height:13px;-webkit-text-stroke:.35px currentColor;color:#2271b1;letter-spacing:0.001px;">#32 OLIfm OLIlm</span>
<span class="t" style="left:854.1px;top:612.50px;font-size:13px;line-height:13px;color:#50575e;letter-spacing:-0.21px;">Mar 15, 2021</span>
<span class="t" style="left:1197.1px;top:611.80px;font-size:13px;line-height:13px;color:#94660c;letter-spacing:0.109px;">On hold</span>
<span class="t" style="left:1837.4px;top:612.80px;font-size:13px;line-height:13px;color:#50575e;letter-spacing:-0.441px;">£757</span>
<span class="t" style="left:283.6px;top:666.00px;font-size:13px;line-height:13px;-webkit-text-stroke:.35px currentColor;color:#2271b1;letter-spacing:0.051px;">#29 OLIfm OLIlm</span>
<span class="t" style="left:854.1px;top:666.50px;font-size:13px;line-height:13px;color:#50575e;letter-spacing:-0.21px;">Mar 12, 2021</span>
<span class="t" style="left:1197.1px;top:665.80px;font-size:13px;line-height:13px;color:#5b841b;letter-spacing:-0.368px;">Processing</span>
<span class="t" style="left:1837.4px;top:666.80px;font-size:13px;line-height:13px;color:#50575e;letter-spacing:-0.441px;">£757</span>
<span class="t" style="left:283.6px;top:720.00px;font-size:13px;line-height:13px;-webkit-text-stroke:.35px currentColor;color:#2271b1;">#28 VladFM OleLM</span>
<span class="t" style="left:854.1px;top:720.50px;font-size:13px;line-height:13px;color:#50575e;letter-spacing:-0.21px;">Mar 12, 2021</span>
<span class="t" style="left:1197.1px;top:719.80px;font-size:13px;line-height:13px;color:#94660c;letter-spacing:0.109px;">On hold</span>
<span class="t" style="left:1837.4px;top:720.80px;font-size:13px;line-height:13px;color:#50575e;">£1,256</span>
<span class="t" style="left:283.6px;top:774.00px;font-size:13px;line-height:13px;-webkit-text-stroke:.35px currentColor;color:#2271b1;letter-spacing:0.051px;">#27 OldoFN OldoLN</span>
<span class="t" style="left:854.1px;top:774.50px;font-size:13px;line-height:13px;color:#50575e;letter-spacing:-0.21px;">Mar 12, 2021</span>
<span class="t" style="left:1197.1px;top:773.80px;font-size:13px;line-height:13px;color:#5b841b;letter-spacing:-0.368px;">Processing</span>
<span class="t" style="left:1837.4px;top:774.80px;font-size:13px;line-height:13px;color:#50575e;letter-spacing:-0.441px;">£757</span>
<span class="t" style="left:283.6px;top:828.00px;font-size:13px;line-height:13px;-webkit-text-stroke:.35px currentColor;color:#2271b1;letter-spacing:-0.201px;">#23 V O</span>
<span class="t" style="left:854.1px;top:828.50px;font-size:13px;line-height:13px;color:#50575e;letter-spacing:-0.258px;">Mar 9, 2021</span>
<span class="t" style="left:1197.1px;top:827.80px;font-size:13px;line-height:13px;color:#94660c;letter-spacing:0.109px;">On hold</span>
<span class="t" style="left:1837.4px;top:828.80px;font-size:13px;line-height:13px;color:#50575e;letter-spacing:-0.441px;">£348</span>
<span class="t" style="left:283.6px;top:882.00px;font-size:13px;line-height:13px;-webkit-text-stroke:.35px currentColor;color:#2271b1;letter-spacing:-0.201px;">#20 V O</span>
<span class="t" style="left:854.1px;top:882.50px;font-size:13px;line-height:13px;color:#50575e;letter-spacing:-0.258px;">Mar 9, 2021</span>
<span class="t" style="left:1197.1px;top:881.80px;font-size:13px;line-height:13px;color:#5b841b;letter-spacing:-0.368px;">Processing</span>
<span class="t" style="left:1837.4px;top:882.80px;font-size:13px;line-height:13px;color:#50575e;letter-spacing:-0.441px;">£348</span>
<span class="t" style="left:1576.4px;top:680.34px;font-size:12px;line-height:12px;color:#ffffff;letter-spacing:-0.005px;z-index:30;">Mail</span>
<span class="t" style="left:1628.4px;top:712.20px;font-size:15px;line-height:15px;font-weight:700;color:#ffffff;letter-spacing:-0.277px;z-index:30;">OldoWp</span>
<span class="t" style="left:1628.4px;top:732.20px;font-size:15px;line-height:15px;color:#b4b4b4;letter-spacing:0.039px;z-index:30;">Your OldoWp order is now complete</span>
<span class="t" style="left:1629.4px;top:762.80px;font-size:13px;line-height:13px;font-weight:700;color:#d2d2d2;letter-spacing:-0.1px;z-index:30;">info@its4you.sk</span>
<span class="t" style="left:1588.1px;top:836.52px;font-size:12.5px;line-height:12.5px;color:#ffffff;letter-spacing:-0.442px;z-index:30;">Set flag</span>
<span class="t" style="left:1701.5px;top:836.52px;font-size:12.5px;line-height:12.5px;color:#ffffff;letter-spacing:-0.448px;z-index:30;">Delete</span>
<span class="t" style="left:1809.3px;top:836.52px;font-size:12.5px;line-height:12.5px;color:#ffffff;letter-spacing:-0.642px;z-index:30;">Dismiss</span>
</div>
</body>
</html>
